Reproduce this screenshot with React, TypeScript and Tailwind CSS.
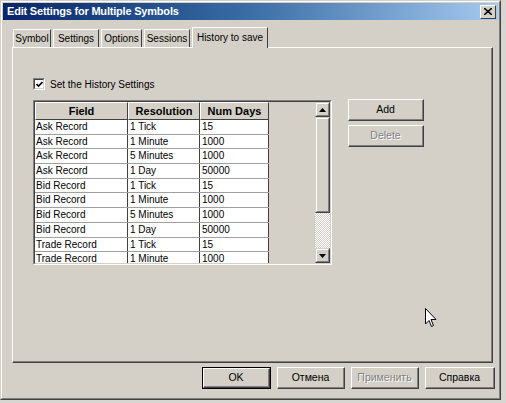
import React from "react";

const rows: [string, string, string][] = [
  ["Ask Record", "1 Tick", "15"],
  ["Ask Record", "1 Minute", "1000"],
  ["Ask Record", "5 Minutes", "1000"],
  ["Ask Record", "1 Day", "50000"],
  ["Bid Record", "1 Tick", "15"],
  ["Bid Record", "1 Minute", "1000"],
  ["Bid Record", "5 Minutes", "1000"],
  ["Bid Record", "1 Day", "50000"],
  ["Trade Record", "1 Tick", "15"],
  ["Trade Record", "1 Minute", "1000"],
];

const font = { fontFamily: '"Liberation Sans", Arial, sans-serif' };

function Tab({ label, w }: { label: string; w: string }) {
  return (
    <div
      className={`${w} h-[18px] mt-[2px] border-l border-t border-white border-r border-r-[#404040] flex items-center justify-center text-[10px] text-black bg-[#d4d0c8]`}
    >
      {label}
    </div>
  );
}

function Btn({
  label,
  w,
  disabled,
  def,
}: {
  label: string;
  w: string;
  disabled?: boolean;
  def?: boolean;
}) {
  return (
    <div className={`${w} h-[22px] ${def ? "border border-black" : ""}`}>
      <div className="w-full h-full border-l border-t border-white border-r border-b border-r-[#404040] border-b-[#404040] bg-[#d4d0c8]">
        <div className="w-full h-full border-r border-b border-r-[#808080] border-b-[#808080] flex items-center justify-center text-[10.5px]">
          {disabled ? (
            <span className="text-[#808080]" style={{ textShadow: "1px 1px 0 #ffffff" }}>
              {label}
            </span>
          ) : (
            <span className="text-black">{label}</span>
          )}
        </div>
      </div>
    </div>
  );
}

function ScrollBtn({ up }: { up?: boolean }) {
  return (
    <div className="w-[15px] h-[15px] border-l border-t border-[#d4d0c8] border-r border-b border-r-[#404040] border-b-[#404040] bg-[#d4d0c8]">
      <div className="w-full h-full border-l border-t border-white border-r border-b border-r-[#808080] border-b-[#808080] flex items-center justify-center">
        <svg width="7" height="4" viewBox="0 0 7 4">
          {up ? (
            <polygon points="3.5,0 7,4 0,4" fill="#000" />
          ) : (
            <polygon points="0,0 7,0 3.5,4" fill="#000" />
          )}
        </svg>
      </div>
    </div>
  );
}

export default function App() {
  return (
    <div className="w-[506px] h-[403px] bg-[#d8d6d0] overflow-hidden" style={font}>
      <div className="w-[501px] h-[400px] bg-[#d4d0c8] border-l border-t border-[#d4d0c8] border-r border-b border-r-[#404040] border-b-[#404040]">
        <div className="w-full h-full border-l border-t border-white border-r border-b border-r-[#808080] border-b-[#808080] flex flex-col px-[1px] pt-[1px]">
          {/* Title bar */}
          <div className="h-[17px] flex items-center justify-between pl-[4px] pr-[2px] bg-gradient-to-r from-[#0a246a] via-[#3a6ea5] to-[#a6caf0]">
            <span className="text-white font-bold text-[11px] tracking-[-0.2px]">
              Edit Settings for Multiple Symbols
            </span>
            <div className="w-[16px] h-[14px] bg-[#d4d0c8] border-l border-t border-white border-r border-b border-r-[#404040] border-b-[#404040] flex items-center justify-center">
              <svg width="8" height="7" viewBox="0 0 8 7">
                <path d="M0 0 L8 7 M8 0 L0 7" stroke="#000" strokeWidth="1.6" />
              </svg>
            </div>
          </div>

          {/* Tabs */}
          <div className="flex items-end gap-[2px] ml-[10px] mt-[7px] h-[20px] relative z-10">
            <Tab label="Symbol" w="w-[38px]" />
            <Tab label="Settings" w="w-[46px]" />
            <Tab label="Options" w="w-[41px]" />
            <Tab label="Sessions" w="w-[46px]" />
            <div className="w-[76px] h-[21px] -mb-[1px] border-l border-t border-white border-r border-r-[#404040] flex items-center justify-center text-[10px] bg-[#d4d0c8] -mt-[1px]">
              <span className="-mt-[2px]">History to save</span>
            </div>
          </div>

          {/* Panel */}
          <div className="ml-[9px] w-[481px] h-[316px] border-l border-t border-white border-r border-b border-r-[#404040] border-b-[#404040]">
            <div className="w-full h-full border-r border-b border-r-[#808080] border-b-[#808080] flex flex-col pl-[20px] pt-[30px]">
              {/* Checkbox */}
              <div className="flex items-center gap-[5px] h-[12px]">
                <div className="w-[12px] h-[12px] border-l border-t border-[#808080] border-r border-b border-r-white border-b-white">
                  <div className="w-full h-full border-l border-t border-[#404040] border-r border-b border-r-[#d4d0c8] border-b-[#d4d0c8] bg-white flex items-center justify-center">
                    <svg width="7" height="7" viewBox="0 0 7 7">
                      <path d="M0.5 3 L2.5 5 L6.5 1" stroke="#000" strokeWidth="1.6" fill="none" />
                    </svg>
                  </div>
                </div>
                <span className="text-[10px] text-black">Set the History Settings</span>
              </div>

              <div className="flex mt-[10px]">
                {/* Grid */}
                <div className="w-[299px] h-[165px] border-l border-t border-[#808080] border-r border-b border-r-white border-b-white">
                  <div className="w-full h-full border-l border-t border-[#404040] border-r border-b border-r-[#d4d0c8] border-b-[#d4d0c8] flex bg-[#d4d0c8] overflow-hidden">
                    <div className="flex flex-col w-[234px]">
                      {/* header */}
                      <div className="flex h-[18px] shrink-0">
                        {[
                          ["Field", "w-[93px]"],
                          ["Resolution", "w-[72px]"],
                          ["Num Days", "w-[69px]"],
                        ].map(([h, w]) => (
                          <div
                            key={h}
                            className={`${w} h-full border-l border-t border-white border-r border-b border-r-[#404040] border-b-[#404040] flex items-center justify-center text-[11px] font-bold text-black`}
                          >
                            {h}
                          </div>
                        ))}
                      </div>
                      {rows.map((r, i) => (
                        <div key={i} className="flex h-[14.7px] shrink-0 bg-white border-b border-[#a0a0a0]">
                          <div className="w-[93px] border-r border-[#404040] pl-[1px] text-[10px] leading-[14px] text-black whitespace-nowrap">
                            {r[0]}
                          </div>
                          <div className="w-[72px] border-r border-[#404040] pl-[2px] text-[10px] leading-[14px] text-black whitespace-nowrap">
                            {r[1]}
                          </div>
                          <div className="w-[69px] border-r border-[#404040] pl-[2px] text-[10px] leading-[14px] text-black whitespace-nowrap">
                            {r[2]}
                          </div>
                        </div>
                      ))}
                    </div>
                    <div className="flex-1" />
                    {/* scrollbar */}
                    <div className="w-[15px] flex flex-col">
                      <ScrollBtn up />
                      <div className="h-[96px] border-l border-t border-[#d4d0c8] border-r border-b border-r-[#404040] border-b-[#404040] bg-[#d4d0c8]">
                        <div className="w-full h-full border-l border-t border-white border-r border-b border-r-[#808080] border-b-[#808080]" />
                      </div>
                      <div
                        className="flex-1"
                        style={{
                          backgroundColor: "#ffffff",
                          backgroundImage:
                            "repeating-conic-gradient(#d4d0c8 0% 25%, #ffffff 0% 50%)",
                          backgroundSize: "2px 2px",
                        }}
                      />
                      <ScrollBtn />
                    </div>
                  </div>
                </div>

                {/* Side buttons */}
                <div className="flex flex-col gap-[4px] ml-[16px] -mt-[1px]">
                  <Btn label="Add" w="w-[76px]" />
                  <Btn label="Delete" w="w-[76px]" disabled />
                </div>
              </div>

              {/* cursor */}
              <div className="relative">
                <svg
                  className="absolute left-[392px] top-[43px]"
                  width="12"
                  height="20"
                  viewBox="0 0 12 20"
                >
                  <path
                    d="M0.5 0.5 L0.5 16 L4 12.5 L6.5 18.5 L8.5 17.5 L6 11.5 L11 11.5 Z"
                    fill="#fff"
                    stroke="#000"
                    strokeWidth="1"
                  />
                </svg>
              </div>
            </div>
          </div>

          {/* Bottom buttons */}
          <div className="flex justify-end gap-[6px] mt-[4px] pr-[3px]">
            <Btn label="OK" w="w-[69px]" def />
            <Btn label="Отмена" w="w-[68px]" />
            <Btn label="Применить" w="w-[68px]" disabled />
            <Btn label="Справка" w="w-[70px]" />
          </div>
        </div>
      </div>
    </div>
  );
}
